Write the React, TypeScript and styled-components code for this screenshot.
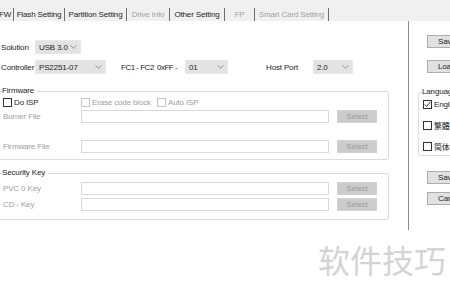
import * as React from "react";
import styled, { createGlobalStyle } from "styled-components";

const GlobalStyle = createGlobalStyle`
    html, body {
        margin: 0;
        padding: 0;
        background: #ffffff;
    }
    body {
        font-family: "Liberation Sans", "Noto Sans CJK SC", Arial, sans-serif;
    }
`;

const Window = styled.div`
    width: 450px;
    height: 295px;
    overflow: hidden;
    background: #ffffff;
    font-size: 8px;
    letter-spacing: -0.15px;
    color: #1e1e1e;
    display: flex;
    flex-direction: column;
`;

const TabBar = styled.div`
    display: flex;
    flex-shrink: 0;
    height: 21px;
    padding-top: 8px;
    box-sizing: border-box;
    background: #f0f0f0;
`;

const Tab = styled.div<{ $w: number; $disabled?: boolean; $ml?: number }>`
    width: ${p => p.$w}px;
    margin-left: ${p => p.$ml || 0}px;
    flex-shrink: 0;
    box-sizing: border-box;
    height: 13px;
    line-height: 14px;
    text-align: center;
    white-space: nowrap;
    border-right: 1px solid #6e6e6e;
    color: ${p => p.$disabled ? "#a3a3a3" : "#1e1e1e"};
`;

const Body = styled.div`
    display: flex;
    height: 209px;
    flex-shrink: 0;
`;

const Main = styled.div`
    width: 408px;
    flex-shrink: 0;
    box-sizing: border-box;
    padding: 19px 0 0 1px;
    display: flex;
    flex-direction: column;
`;

const Row = styled.div<{ $mt?: number }>`
    display: flex;
    align-items: center;
    height: 14px;
    margin-top: ${p => p.$mt || 0}px;
`;

const Label = styled.span<{ $w?: number; $ml?: number; $muted?: boolean; $tight?: boolean }>`
    width: ${p => p.$w ? `${p.$w}px` : "auto"};
    margin-left: ${p => p.$ml || 0}px;
    flex-shrink: 0;
    white-space: nowrap;
    letter-spacing: ${p => p.$tight ? "-0.5px" : "inherit"};
    color: ${p => p.$muted ? "#a0a0a0" : "#1e1e1e"};
`;

const SelectBox = styled.div<{ $w: number }>`
    width: ${p => p.$w}px;
    height: 14px;
    flex-shrink: 0;
    box-sizing: border-box;
    display: flex;
    align-items: center;
    justify-content: space-between;
    padding: 0 3px 0 3px;
    white-space: nowrap;
    background: #e3e3e3;
    border: 1px solid #e8e8e8;
    color: #1e1e1e;
`;

const Group = styled.fieldset<{ $mt: number; $pb: number }>`
    margin: ${p => p.$mt}px 19px 0 -3px;
    padding: 0 10px ${p => p.$pb}px 4px;
    border: 1px solid #dcdcdc;
    border-radius: 2px;
    min-width: 0;
`;

const Legend = styled.legend`
    padding: 0 3px 0 0;
    margin-left: -1px;
    line-height: 10px;
    height: 10px;
    color: #1e1e1e;
`;

const CheckRow = styled.div<{ $mt?: number }>`
    display: grid;
    grid-template-columns: 78px 76px auto;
    height: 10px;
    align-items: center;
    margin-top: ${p => p.$mt || 0}px;
`;

const CheckItem = styled.label<{ $muted?: boolean }>`
    display: flex;
    align-items: center;
    gap: 2px;
    white-space: nowrap;
    color: ${p => p.$muted ? "#a0a0a0" : "#1e1e1e"};
`;

const Box = styled.span<{ $muted?: boolean }>`
    width: 9px;
    height: 9px;
    box-sizing: border-box;
    flex-shrink: 0;
    display: flex;
    background: #ffffff;
    border: 1px solid ${p => p.$muted ? "#c4c4c4" : "#333333"};
`;

const FileRow = styled.div<{ $mt?: number }>`
    display: grid;
    grid-template-columns: 78px 248px 48px;
    align-items: center;
    height: 13px;
    margin-top: ${p => p.$mt || 0}px;
`;

const TextInput = styled.div`
    height: 13px;
    box-sizing: border-box;
    background: #ffffff;
    border: 1px solid #d9d9d9;
`;

const SelectButton = styled.div`
    height: 13px;
    margin-left: 8px;
    box-sizing: border-box;
    line-height: 11px;
    text-align: center;
    background: #cccccc;
    border: 1px solid #d2d2d2;
    color: #9c9c9c;
`;

const Side = styled.div`
    flex: 1;
    border-left: 1px solid #8c8c8c;
    padding: 14px 0 0 18px;
    display: flex;
    flex-direction: column;
    align-items: flex-start;
`;

const PanelButton = styled.div<{ $mt?: number }>`
    width: 46px;
    height: 13px;
    box-sizing: border-box;
    flex-shrink: 0;
    margin-top: ${p => p.$mt || 0}px;
    padding-left: 10px;
    line-height: 11px;
    white-space: nowrap;
    background: #e1e1e1;
    border: 1px solid #adadad;
    color: #1e1e1e;
`;

const LangGroup = styled.fieldset`
    margin: 14px 0 0 -9px;
    padding: 0 0 4px 3px;
    width: 60px;
    border: 1px solid #dcdcdc;
    border-radius: 2px;
    min-width: 0;
`;

const LangLegend = styled.legend`
    padding: 0;
    line-height: 10px;
    height: 10px;
    color: #1e1e1e;
`;

const LangItem = styled.label<{ $mt: number }>`
    display: flex;
    align-items: center;
    gap: 2px;
    height: 10px;
    margin: ${p => p.$mt}px 0 0 1px;
    white-space: nowrap;
    color: #1e1e1e;
`;

const Watermark = styled.div`
    display: flex;
    justify-content: flex-end;
    padding-right: 4px;
    margin-top: 12px;
    font-family: "Noto Sans CJK SC", "Noto Sans", sans-serif;
    font-size: 32px;
    line-height: 34px;
    letter-spacing: 0;
    color: #d4d4d4;
`;

const Chevron = () => (
    <svg width="7" height="4" viewBox="0 0 7 4">
        <polyline points="0.5,0.5 3.5,3.2 6.5,0.5" fill="none" stroke="#8a8a8a" strokeWidth="0.9" />
    </svg>
);

const Tick = () => (
    <svg width="7" height="7" viewBox="0 0 7 7">
        <polyline points="0.8,3.5 2.6,5.4 6.3,1" fill="none" stroke="#333333" strokeWidth="1" />
    </svg>
);

const Select = ({ value, width }: { value: string; width: number }) => (
    <SelectBox $w={width}>
        <span>{value}</span>
        <Chevron />
    </SelectBox>
);

const Check = ({ label, muted, checked }: { label: string; muted?: boolean; checked?: boolean }) => (
    <CheckItem $muted={muted}>
        <Box $muted={muted}>{checked && <Tick />}</Box>
        {label}
    </CheckItem>
);

const FileField = ({ label, mt }: { label: string; mt?: number }) => (
    <FileRow $mt={mt}>
        <Label $muted>{label}</Label>
        <TextInput />
        <SelectButton>Select</SelectButton>
    </FileRow>
);

const tabs = [
    { name: "FW", w: 17, ml: -3 },
    { name: "Flash Setting", w: 51 },
    { name: "Partition Setting", w: 62 },
    { name: "Drive Info", w: 43, disabled: true },
    { name: "Other Setting", w: 55 },
    { name: "FP", w: 30, disabled: true },
    { name: "Smart Card Setting", w: 74, disabled: true },
];

const languages = [
    { name: "English", checked: true, mt: 2 },
    { name: "繁體中文", mt: 11 },
    { name: "简体中文", mt: 11 },
];

export default function App() {
    return (
        <Window>
            <GlobalStyle />
            <TabBar>
                {tabs.map(t => (
                    <Tab key={t.name} $w={t.w} $ml={t.ml} $disabled={t.disabled}>{t.name}</Tab>
                ))}
            </TabBar>
            <Body>
                <Main>
                    <Row>
                        <Label $w={34}>Solution</Label>
                        <Select value="USB 3.0" width={46} />
                    </Row>
                    <Row $mt={6}>
                        <Label $w={34}>Controller</Label>
                        <Select value="PS2251-07" width={71} />
                        <Label $w={36} $ml={15} $tight>FC1 - FC2</Label>
                        <Label $w={28} $tight>0xFF -</Label>
                        <Select value="01" width={43} />
                        <Label $w={47} $ml={38}>Host Port</Label>
                        <Select value="2.0" width={40} />
                    </Row>

                    <Group $mt={12} $pb={6}>
                        <Legend>Firmware</Legend>
                        <CheckRow $mt={1}>
                            <Check label="Do ISP" />
                            <Check label="Erase code block" muted />
                            <Check label="Auto ISP" muted />
                        </CheckRow>
                        <FileField label="Burner File" mt={3} />
                        <FileField label="Firmware File" mt={17} />
                    </Group>

                    <Group $mt={8} $pb={8}>
                        <Legend>Security Key</Legend>
                        <FileField label="PVC 0 Key" mt={4} />
                        <FileField label="CD - Key" mt={3} />
                    </Group>
                </Main>
                <Side>
                    <PanelButton>Save</PanelButton>
                    <PanelButton $mt={12}>Load</PanelButton>
                    <LangGroup>
                        <LangLegend>Language</LangLegend>
                        {languages.map(l => (
                            <LangItem key={l.name} $mt={l.mt}>
                                <Box>{l.checked && <Tick />}</Box>
                                {l.name}
                            </LangItem>
                        ))}
                    </LangGroup>
                    <PanelButton $mt={15}>Save</PanelButton>
                    <PanelButton $mt={8}>Cancel</PanelButton>
                </Side>
            </Body>
            <Watermark>软件技巧</Watermark>
        </Window>
    );
}
